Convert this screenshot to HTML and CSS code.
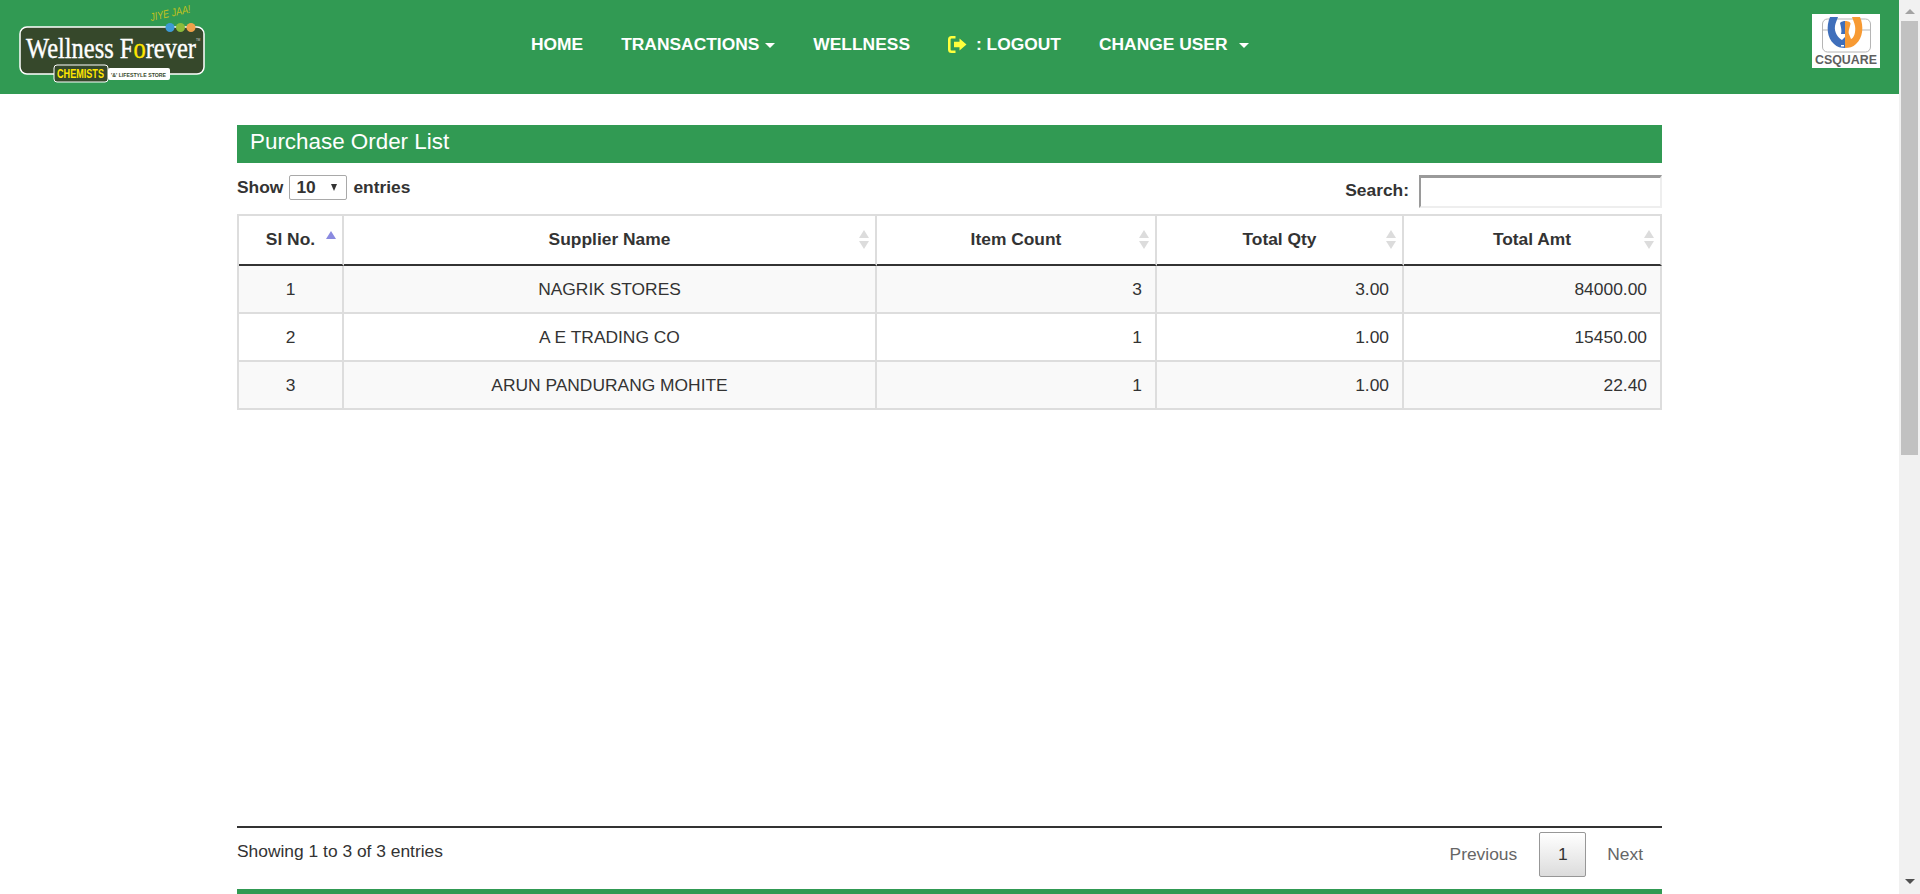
FILE: index.html
```html
<!DOCTYPE html>
<html lang="en">
<head>
<meta charset="utf-8">
<title>Purchase Order List</title>
<link rel="stylesheet" href="styles.css">
</head>
<body>
<div class="page">
  <header class="topbar">
    <svg class="logo" width="210" height="94" viewBox="0 0 210 94">
      <text x="151" y="21" class="logo-tag" textLength="41" lengthAdjust="spacingAndGlyphs" transform="rotate(-12 151 21)">JIYE JAA!</text>
      <rect x="20" y="27" width="184" height="47" rx="7" fill="#36482b" stroke="#fff" stroke-width="1.500"/>
      <circle cx="170" cy="27.500" r="4.500" fill="#3d9ad6"/>
      <circle cx="180.500" cy="27.500" r="4.500" fill="#8cbb3a"/>
      <circle cx="191" cy="27.500" r="4.500" fill="#f0a14a"/>
      <text x="26" y="58" class="logo-name" textLength="170" lengthAdjust="spacingAndGlyphs">Wellness F<tspan class="logo-o">o</tspan>rever</text>
      <text x="196" y="41" class="logo-tm">TM</text>
      <rect x="54" y="65" width="54" height="17" rx="3" fill="#36482b" stroke="#fff"/>
      <text x="57" y="78" class="logo-chem" textLength="47" lengthAdjust="spacingAndGlyphs">CHEMISTS</text>
      <rect x="108" y="68" width="62" height="12" rx="2" fill="#fff"/>
      <text x="111" y="77" class="logo-store" textLength="55" lengthAdjust="spacingAndGlyphs">'&amp;' LIFESTYLE STORE</text>
    </svg>
    <nav class="nav">
      <a class="nav-link">HOME</a>
      <a class="nav-link">TRANSACTIONS<span class="caret"></span></a>
      <a class="nav-link">WELLNESS</a>
      <a class="nav-link">
        <svg class="logout-icon" width="20" height="17" viewBox="0 0 20 17">
          <path d="M7.500 1.300H3.500Q1.300 1.300 1.300 3.500V13.500Q1.300 15.700 3.500 15.700H7.500" fill="none" stroke="#ffff3c" stroke-width="2.600"/>
          <path d="M6 5.800H11.500V2.500L18.500 8.500L11.500 14.500V11.200H6Z" fill="#ffff3c"/>
        </svg>: LOGOUT</a>
      <a class="nav-link">CHANGE USER<span class="caret caret-wide"></span></a>
    </nav>
    <svg class="partner" width="68" height="54" viewBox="0 0 68 54">
      <rect width="68" height="54" fill="#fff"/>
      <rect x="10.500" y="5" width="48" height="33" rx="5" fill="none" stroke="#b5b5b5"/>
      <path d="M10.500 16H18M49 16H58.500" stroke="#b5b5b5"/>
      <path d="M18 3C14 12 15 24 22 30C25 33 29 34 33 34V23L30 26C26 24 22 18 23 12C23.500 9 25 6 26 3Z" fill="#3f6fbb"/>
      <path d="M28 9C30 7 33 7 33 7V20H29C30 17 29 13 28 9Z" fill="#3f6fbb"/>
      <path d="M48 3C52 12 51 24 44 30C41 33 37 34 33 34V7C36 7 39 8 38.500 10C37.500 14 36 18 37 20L39 25C42 24 44 18 43 12C42.500 9 41 6 40 3Z" fill="#f79a33"/>
      <path d="M29 31H32V32.500H29Z" fill="#fff"/>
      <text x="34" y="50" class="partner-name" textLength="62" lengthAdjust="spacingAndGlyphs">CSQUARE</text>
    </svg>
  </header>
  <main class="content">
    <h1 class="title">Purchase Order List</h1>
    <div class="controls">
      <label class="length">Show
        <span class="select"><span>10</span><i class="select-arrow"></i></span>
        entries</label>
      <label class="search">Search:<span class="search-box"></span></label>
    </div>
    <table class="grid">
      <colgroup>
        <col class="c1"><col class="c2"><col class="c3"><col class="c4"><col class="c5">
      </colgroup>
      <thead>
        <tr>
          <th>Sl No.<i class="sort sort-active"></i></th>
          <th>Supplier Name<i class="sort"></i></th>
          <th>Item Count<i class="sort"></i></th>
          <th>Total Qty<i class="sort"></i></th>
          <th>Total Amt<i class="sort"></i></th>
        </tr>
      </thead>
      <tbody>
        <tr class="odd"><td>1</td><td>NAGRIK STORES</td><td class="num">3</td><td class="num">3.00</td><td class="num">84000.00</td></tr>
        <tr><td>2</td><td>A E TRADING CO</td><td class="num">1</td><td class="num">1.00</td><td class="num">15450.00</td></tr>
        <tr class="odd"><td>3</td><td>ARUN PANDURANG MOHITE</td><td class="num">1</td><td class="num">1.00</td><td class="num">22.40</td></tr>
      </tbody>
    </table>
    <div class="table-foot">
      <div class="info">Showing 1 to 3 of 3 entries</div>
      <div class="pager">
        <a class="page-link">Previous</a>
        <a class="page-link page-current">1</a>
        <a class="page-link page-last">Next</a>
      </div>
    </div>
    <div class="footer-bar"></div>
  </main>
</div>
<aside class="scrollbar">
  <i class="sb-up"></i>
  <div class="sb-thumb"></div>
  <i class="sb-down"></i>
</aside>
</body>
</html>
```
FILE: styles.css
```css
* { box-sizing: border-box; }
html, body { margin: 0; height: 894px; overflow: hidden; }
body {
  display: flex;
  font-family: "Liberation Sans", Arial, sans-serif;
  font-size: 17.400px;
  line-height: 1.43;
  color: #333;
  background: #fff;
}
.page { flex: 1; min-width: 0; display: flex; flex-direction: column; }

.topbar {
  height: 94px;
  flex: none;
  background: #319a53;
  display: flex;
  align-items: flex-start;
}
.logo { flex: none; }
.logo-tag { font: italic 11px "Liberation Sans", sans-serif; fill: #c4c21c; }
.logo-name { font: 30px "Liberation Serif", serif; fill: #fff; stroke: #fff; stroke-width: 0.400px; }
.logo-o { fill: #ffe600; stroke: #ffe600; }
.logo-tm { font: 3px "Liberation Sans", sans-serif; fill: #ddd; }
.logo-chem { font: bold 12px "Liberation Sans", sans-serif; fill: #ffe600; }
.logo-store { font: bold 6px "Liberation Sans", sans-serif; fill: #36482b; }

.nav {
  display: flex;
  align-items: center;
  gap: 38px;
  margin-left: 321px;
  height: 89px;
}
.nav-link {
  display: flex;
  align-items: center;
  font-weight: bold;
  font-size: 17.400px;
  color: #fff;
  white-space: nowrap;
}
.logout-icon { margin-right: 8px; }
.caret {
  width: 0;
  height: 0;
  margin-left: 6px;
  margin-top: 3px;
  border-top: 5px solid #fff;
  border-left: 5px solid transparent;
  border-right: 5px solid transparent;
}
.caret-wide { margin-left: 11px; }
.partner { flex: none; margin: 14px 19px 0 auto; }
.partner-name { font: bold 13.500px "Liberation Sans", sans-serif; fill: #5f5f5f; text-anchor: middle; }

.content {
  flex: 1;
  min-height: 0;
  display: flex;
  flex-direction: column;
  width: 1425px;
  margin-left: 237px;
  padding-top: 31px;
}
.title {
  margin: 0;
  height: 38px;
  padding-left: 13px;
  background: #319a53;
  color: #fff;
  font-weight: normal;
  font-size: 22.400px;
  line-height: 34px;
}
.controls {
  display: flex;
  justify-content: space-between;
  font-weight: bold;
  height: 51px;
  padding-top: 12px;
}
.length { display: flex; align-items: center; gap: 6px; height: 25px; }
.select {
  width: 58px;
  height: 25px;
  border: 1px solid #a9a9a9;
  border-radius: 2px;
  display: flex;
  align-items: center;
  justify-content: space-between;
  padding: 0 9px 0 6px;
}
.select-arrow {
  width: 0;
  height: 0;
  border-top: 7px solid #333;
  border-left: 3.500px solid transparent;
  border-right: 3.500px solid transparent;
}
.search { display: flex; align-items: flex-start; gap: 10px; line-height: 31px; }
.search-box {
  width: 243px;
  height: 33px;
  border: 2px solid;
  border-top-width: 3px;
  border-color: #9a9a9a #eee #eee #9a9a9a;
  background: #fff;
}

.grid {
  width: 1425px;
  table-layout: fixed;
  border-collapse: separate;
  border-spacing: 0;
  border-top: 2px solid #ddd;
  border-left: 2px solid #ddd;
}
.c1 { width: 105px; }
.c2 { width: 533px; }
.c3 { width: 280px; }
.c4 { width: 247px; }
.c5 { width: 258px; }
.grid th {
  position: relative;
  height: 50px;
  font-weight: bold;
  text-align: center;
  padding: 0 0 2px;
  border-right: 2px solid #ddd;
  border-bottom: 2px solid #333;
  color: #333;
}
.grid td {
  height: 48px;
  padding: 0 13px;
  text-align: center;
  border-right: 2px solid #ddd;
  border-bottom: 2px solid #ddd;
}
.grid td.num { text-align: right; }
.grid .odd td { background: #f9f9f9; }

.sort {
  position: absolute;
  right: 6px;
  top: 14px;
  width: 10px;
  height: 19px;
}
.sort::before, .sort::after {
  content: "";
  position: absolute;
  left: 0;
  border-left: 5px solid transparent;
  border-right: 5px solid transparent;
}
.sort::before { top: 0; border-bottom: 8px solid #dcdcdc; }
.sort::after { bottom: 0; border-top: 8px solid #dcdcdc; }
.sort-active { right: 6px; top: 15px; }
.sort-active::before { border-bottom-color: #8a8ae0; }
.sort-active::after { display: none; }

.table-foot {
  margin-top: auto;
  height: 63px;
  border-top: 2px solid #333;
  display: flex;
  justify-content: space-between;
}
.info { padding-top: 11px; }
.pager { display: flex; align-items: flex-start; padding-top: 4px; }
.page-link {
  height: 45px;
  padding: 0 22px;
  line-height: 45px;
  color: #666;
}
.page-last { padding: 0 19px 0 21px; }
.page-current {
  width: 47px;
  padding: 0;
  text-align: center;
  color: #333;
  border: 1px solid #979797;
  border-radius: 2px;
  background: linear-gradient(#fff, #dcdcdc);
  line-height: 43px;
}
.footer-bar { height: 5px; flex: none; background: #319a53; }

.scrollbar {
  width: 21px;
  flex: none;
  height: 894px;
  background: #f1f1f1;
  display: flex;
  flex-direction: column;
  align-items: center;
}
.sb-up {
  margin-top: 9px;
  margin-bottom: 7px;
  border-left: 5px solid transparent;
  border-right: 5px solid transparent;
  border-bottom: 5px solid #a3a3a3;
}
.sb-thumb { width: 17px; height: 434px; background: #c1c1c1; }
.sb-down {
  margin-top: auto;
  margin-bottom: 10px;
  border-left: 5px solid transparent;
  border-right: 5px solid transparent;
  border-top: 5px solid #505050;
}
```
